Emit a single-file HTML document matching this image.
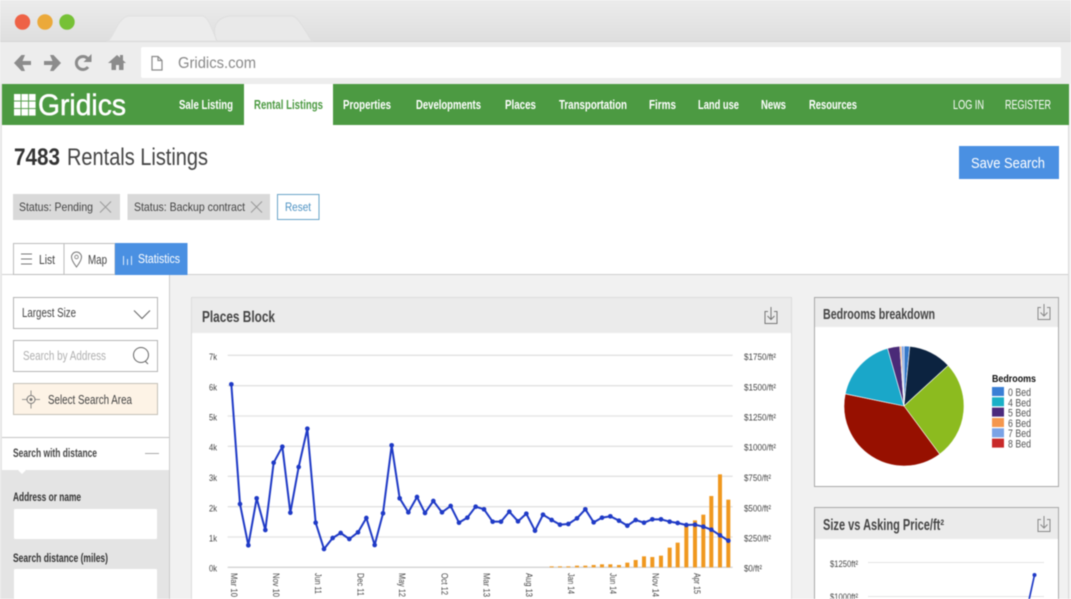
<!DOCTYPE html>
<html><head><meta charset="utf-8"><title>Gridics</title>
<style>
html,body{margin:0;padding:0;width:1071px;height:599px;overflow:hidden;background:#fff}
svg{display:block;filter:blur(.45px)}
text{font-family:"Liberation Sans",sans-serif;fill:#444}
.nav{font-size:13px;fill:#fff;font-weight:bold}
.tk{font-size:9.5px;fill:#444}
.lg{font-size:11px;fill:#555}
.lbl{font-size:12px;fill:#333;font-weight:bold}
</style></head><body>
<svg width="1071" height="599" viewBox="0 0 1071 599" xmlns="http://www.w3.org/2000/svg">
<defs>
<linearGradient id="top" x1="0" y1="0" x2="0" y2="1"><stop offset="0" stop-color="#ececec"/><stop offset="1" stop-color="#dedede"/></linearGradient>
<marker id="d" markerUnits="userSpaceOnUse" markerWidth="18" markerHeight="18" refX="9" refY="9"><circle cx="9" cy="9" r="7" fill="#1f3ac6"/></marker>
</defs>
<rect width="1071" height="599" fill="#fff"/>
<!-- browser chrome -->
<rect width="1071" height="42" fill="url(#top)"/>
<rect y="42" width="1071" height="42" fill="#ededed"/>
<rect y="41" width="1071" height="1" fill="#d6d6d6"/>
<path d="M108 41c6-4 9-22 20-25h75c6 2 9 14 14 25z" fill="#ececec" stroke="#e0e0e0"/>
<path d="M217 41c-4-8-5-22 12-25h64c7 3 13 17 19 25z" fill="#e9e9e9" stroke="#dedede"/>
<circle cx="22.500" cy="22" r="7.700" fill="#ee6246"/>
<circle cx="45" cy="22" r="7.700" fill="#eba93a"/>
<circle cx="67" cy="22" r="7.700" fill="#76c136"/>
<g fill="#8c8c8c">
<path d="M14 63l7.500-8h3.500l-2.500 6h8.500v4h-8.500l2.500 6h-3.500z"/>
<path d="M61 63l-7.500-8h-3.500l2.500 6h-8.500v4h8.500l-2.500 6h3.500z"/>
<path d="M88 67a6.500 6.500 0 1 1 0-8" fill="none" stroke="#8c8c8c" stroke-width="3"/>
<path d="M91.500 54v8h-8z"/>
<path d="M108 63l9-8 3 2.600V55h3v5.300l3 2.700h-2.500v7h-4.500v-5h-3v5h-4.500v-7z"/>
</g>
<rect x="141" y="47" width="920" height="31" rx="2" fill="#fff"/>
<path d="M152 56.500h6l4 4v9.500h-10zM158 56.500v4h4" fill="none" stroke="#8a8a8a" stroke-width="1.200"/>
<text x="178" y="68" font-size="16" textLength="78" lengthAdjust="spacingAndGlyphs" style="fill:#8a8a8a">Gridics.com</text>
<!-- green nav -->
<rect x="2" y="84" width="1067" height="41" fill="#4c9a42"/>
<rect x="244" y="84" width="89" height="41" fill="#fff"/>
<g fill="#fff">
<rect x="14" y="94" width="6.600" height="6.600"/><rect x="21.500" y="94" width="6.600" height="6.600"/><rect x="29" y="94" width="6.600" height="6.600"/>
<rect x="14" y="101.500" width="6.600" height="6.600"/><rect x="21.500" y="101.500" width="6.600" height="6.600"/><rect x="29" y="101.500" width="6.600" height="6.600"/>
<rect x="14" y="109" width="6.600" height="6.600"/><rect x="21.500" y="109" width="6.600" height="6.600"/><rect x="29" y="109" width="6.600" height="6.600"/>
</g>
<text x="38" y="115" font-size="30" textLength="88" lengthAdjust="spacingAndGlyphs" style="fill:#fff;stroke:#fff;stroke-width:.5">Gridics</text>
<g>
<text class="nav" x="179" y="109" textLength="54" lengthAdjust="spacingAndGlyphs">Sale Listing</text>
<text class="nav" x="254" y="109" textLength="69" lengthAdjust="spacingAndGlyphs" style="fill:#4c9a42">Rental Listings</text>
<text class="nav" x="343" y="109" textLength="48" lengthAdjust="spacingAndGlyphs">Properties</text>
<text class="nav" x="416" y="109" textLength="65" lengthAdjust="spacingAndGlyphs">Developments</text>
<text class="nav" x="505" y="109" textLength="31" lengthAdjust="spacingAndGlyphs">Places</text>
<text class="nav" x="559" y="109" textLength="68" lengthAdjust="spacingAndGlyphs">Transportation</text>
<text class="nav" x="649" y="109" textLength="27" lengthAdjust="spacingAndGlyphs">Firms</text>
<text class="nav" x="698" y="109" textLength="41" lengthAdjust="spacingAndGlyphs">Land use</text>
<text class="nav" x="761" y="109" textLength="25" lengthAdjust="spacingAndGlyphs">News</text>
<text class="nav" x="809" y="109" textLength="48" lengthAdjust="spacingAndGlyphs">Resources</text>
<text class="nav" x="953" y="109" textLength="31" lengthAdjust="spacingAndGlyphs" style="font-weight:normal">LOG IN</text>
<text class="nav" x="1005" y="109" textLength="46" lengthAdjust="spacingAndGlyphs" style="font-weight:normal">REGISTER</text>
</g>
<!-- window side borders -->
<rect x="0" y="84" width="2" height="515" fill="#e6e6e6"/>
<rect x="1068" y="125" width="1" height="474" fill="#d8d8d8"/>
<rect x="1069" y="84" width="2" height="515" fill="#f2f2f2"/>
<!-- heading -->
<text x="14" y="165" font-size="24" font-weight="bold" textLength="46" lengthAdjust="spacingAndGlyphs" style="fill:#333">7483</text>
<text x="67" y="165" font-size="24" textLength="141" lengthAdjust="spacingAndGlyphs" style="fill:#444">Rentals Listings</text>
<rect x="959" y="146" width="100" height="33" fill="#4a90e2"/>
<text x="971" y="168" font-size="14.500" textLength="74" lengthAdjust="spacingAndGlyphs" style="fill:#fff">Save Search</text>
<!-- chips -->
<rect x="13" y="194" width="107" height="26" fill="#d9d9d9"/>
<text x="19" y="211" font-size="12" textLength="74" lengthAdjust="spacingAndGlyphs">Status: Pending</text>
<path d="M100 201.500l11 11M111 201.500l-11 11" stroke="#9a9a9a" fill="none"/>
<rect x="127.500" y="194" width="142.500" height="26" fill="#d9d9d9"/>
<text x="134" y="211" font-size="12" textLength="111" lengthAdjust="spacingAndGlyphs">Status: Backup contract</text>
<path d="M251 201.500l11 11M262 201.500l-11 11" stroke="#9a9a9a" fill="none"/>
<rect x="277.500" y="194.500" width="41.500" height="25" fill="#fff" stroke="#6aa5c8"/>
<text x="285" y="211" font-size="11.500" textLength="26" lengthAdjust="spacingAndGlyphs" style="fill:#4a90c2">Reset</text>
<!-- main area -->
<rect x="170" y="275" width="898" height="324" fill="#f1f1f1"/>
<rect x="2" y="274" width="1066" height="1" fill="#cfcfcf"/>
<rect x="169" y="275" width="1" height="324" fill="#cccccc"/>
<!-- tabs -->
<rect x="13.500" y="243.500" width="50.500" height="31" fill="#fff" stroke="#bdbdbd"/>
<rect x="64" y="243.500" width="51" height="31" fill="#fff" stroke="#bdbdbd"/>
<rect x="115" y="243" width="72.500" height="32" fill="#4a90e2"/>
<path d="M21 254h11M21 259h11M21 264h11" stroke="#777" fill="none"/>
<text x="39" y="264" font-size="13" textLength="16" lengthAdjust="spacingAndGlyphs">List</text>
<path d="M76.500 267c-3-4-5-7-5-10a5 5 0 0 1 10 0c0 3-2 6-5 10z" fill="none" stroke="#777"/>
<circle cx="76.500" cy="257" r="1.800" fill="none" stroke="#777" stroke-width=".8"/>
<text x="88" y="264" font-size="13" textLength="19" lengthAdjust="spacingAndGlyphs">Map</text>
<path d="M123.500 256v9M127.500 259v6M131.500 256v9" stroke="#dcebfb" fill="none"/>
<text x="138" y="263" font-size="13" textLength="42" lengthAdjust="spacingAndGlyphs" style="fill:#fff">Statistics</text>
<!-- sidebar -->
<rect x="13.500" y="297.500" width="144" height="31" fill="#fff" stroke="#b5b5b5"/>
<text x="22" y="317" font-size="13" textLength="54" lengthAdjust="spacingAndGlyphs">Largest Size</text>
<path d="M134 310.500l8 8 8-8" fill="none" stroke="#666"/>
<rect x="13.500" y="340.500" width="144" height="31" fill="#fff" stroke="#b5b5b5"/>
<text x="23" y="360" font-size="13" textLength="83" lengthAdjust="spacingAndGlyphs" style="fill:#b0b0b0">Search by Address</text>
<circle cx="141" cy="355" r="7.500" fill="none" stroke="#666"/><path d="M145 361l3 3" stroke="#666"/>
<rect x="13.500" y="383.500" width="144" height="31" fill="#fdf3e6" stroke="#c4c0b8"/>
<path d="M22 399.500h18M31 390.500v18" stroke="#777" stroke-width=".8"/>
<circle cx="31" cy="399.500" r="4" fill="#fdf3e6" stroke="#777"/><circle cx="31" cy="399.500" r="1.500" fill="#777"/>
<text x="48" y="404" font-size="13" textLength="84" lengthAdjust="spacingAndGlyphs">Select Search Area</text>
<rect x="2" y="437" width="167" height="1" fill="#c4c4c4"/>
<text x="13" y="457" font-size="12" font-weight="bold" textLength="84" lengthAdjust="spacingAndGlyphs">Search with distance</text>
<path d="M145 453.500h14" stroke="#aaa"/>
<rect x="2" y="470" width="167" height="129" fill="#e4e4e4"/>
<path d="M18 470h8l-4 4z" fill="#fff"/>
<text class="lbl" x="13" y="501" textLength="68" lengthAdjust="spacingAndGlyphs">Address or name</text>
<rect x="14" y="509" width="143" height="30" rx="1" fill="#fff"/>
<text class="lbl" x="13" y="562" textLength="95" lengthAdjust="spacingAndGlyphs">Search distance (miles)</text>
<rect x="14" y="569" width="143" height="31" rx="1" fill="#fff"/>
<!-- places block -->
<rect x="191.500" y="297.500" width="600" height="303" fill="#fff" stroke="#dcdcdc"/>
<rect x="192" y="298" width="599" height="35" fill="#ebebeb"/>
<text x="202" y="322" font-size="16" font-weight="bold" textLength="73" lengthAdjust="spacingAndGlyphs" style="fill:#444">Places Block</text>
<g fill="none" stroke="#777"><path d="M768 311.500h-3v12h12v-12h-3"/><path d="M771 307v12M767.500 316l3.500 3.500 3.500-3.500"/></g>
<g transform="translate(190 295) scale(.33333)">
<g stroke="#e2e2e2" stroke-width="4" fill="none">
<path d="M113 181H1628M113 272H1628M113 363H1628M113 454H1628M113 544H1628M113 635H1628M113 726H1628"/>
<path d="M113 817H1628" stroke="#d4d4d4"/>
</g>
<g fill="#f0981f">
<rect x="1079" y="814" width="12" height="3"/><rect x="1104" y="814" width="12" height="3"/><rect x="1129" y="814" width="12" height="3"/>
<rect x="1155" y="812" width="12" height="5"/><rect x="1180" y="812" width="12" height="5"/><rect x="1205" y="810" width="12" height="7"/>
<rect x="1230" y="808" width="12" height="9"/><rect x="1255" y="808" width="12" height="9"/><rect x="1281" y="810" width="12" height="7"/>
<rect x="1306" y="803" width="12" height="14"/><rect x="1331" y="795" width="12" height="22"/><rect x="1356" y="784" width="12" height="33"/>
<rect x="1381" y="786" width="12" height="31"/><rect x="1407" y="782" width="12" height="35"/><rect x="1433" y="758" width="12" height="59"/>
<rect x="1457" y="743" width="12" height="74"/><rect x="1483" y="692" width="12" height="125"/><rect x="1509" y="676" width="12" height="141"/>
<rect x="1534" y="659" width="12" height="158"/><rect x="1558" y="603" width="12" height="214"/><rect x="1584" y="538" width="12" height="279"/>
<rect x="1609" y="614" width="12" height="203"/>
</g>
<polyline fill="none" stroke="#1f3ac6" stroke-width="6" stroke-linejoin="round" marker-start="url(#d)" marker-mid="url(#d)" marker-end="url(#d)" points="124,268 150,627 175,751 200,610 226,705 251,503 277,455 301,653 326,516 352,401 377,683 402,762 428,729 452,714 478,732 504,712 529,669 554,750 579,655 605,451 629,610 655,652 681,606 705,654 730,618 756,652 782,633 807,683 832,668 857,635 882,643 908,680 933,680 958,650 984,679 1009,656 1035,707 1059,659 1085,675 1110,689 1135,687 1161,670 1186,643 1211,682 1236,668 1261,664 1287,677 1312,692 1337,675 1362,683 1387,673 1413,673 1439,680 1463,684 1489,690 1515,689 1540,695 1564,704 1590,721 1615,737"/>
</g>
<g>
<text class="tk" x="209" y="360" textLength="8" lengthAdjust="spacingAndGlyphs">7k</text>
<text class="tk" x="209" y="390.700" textLength="8" lengthAdjust="spacingAndGlyphs">6k</text>
<text class="tk" x="209" y="420.700" textLength="8" lengthAdjust="spacingAndGlyphs">5k</text>
<text class="tk" x="209" y="450.700" textLength="8" lengthAdjust="spacingAndGlyphs">4k</text>
<text class="tk" x="209" y="481" textLength="8" lengthAdjust="spacingAndGlyphs">3k</text>
<text class="tk" x="209" y="511.300" textLength="8" lengthAdjust="spacingAndGlyphs">2k</text>
<text class="tk" x="209" y="541.300" textLength="8" lengthAdjust="spacingAndGlyphs">1k</text>
<text class="tk" x="209" y="571.300" textLength="8" lengthAdjust="spacingAndGlyphs">0k</text>
<text class="tk" x="744" y="360" textLength="32" lengthAdjust="spacingAndGlyphs">$1750/ft²</text>
<text class="tk" x="744" y="390.700" textLength="32" lengthAdjust="spacingAndGlyphs">$1500/ft²</text>
<text class="tk" x="744" y="420.700" textLength="32" lengthAdjust="spacingAndGlyphs">$1250/ft²</text>
<text class="tk" x="744" y="450.700" textLength="32" lengthAdjust="spacingAndGlyphs">$1000/ft²</text>
<text class="tk" x="744" y="481" textLength="27" lengthAdjust="spacingAndGlyphs">$750/ft²</text>
<text class="tk" x="744" y="511.300" textLength="27" lengthAdjust="spacingAndGlyphs">$500/ft²</text>
<text class="tk" x="744" y="541.300" textLength="27" lengthAdjust="spacingAndGlyphs">$250/ft²</text>
<text class="tk" x="744" y="571.300" textLength="18" lengthAdjust="spacingAndGlyphs">$0/ft²</text>
<text class="tk" transform="translate(231.200 573) rotate(90)" textLength="24" lengthAdjust="spacingAndGlyphs">Mar 10</text>
<text class="tk" transform="translate(273.200 573) rotate(90)" textLength="24" lengthAdjust="spacingAndGlyphs">Nov 10</text>
<text class="tk" transform="translate(315.200 573) rotate(90)" textLength="21" lengthAdjust="spacingAndGlyphs">Jun 11</text>
<text class="tk" transform="translate(357.600 573) rotate(90)" textLength="23" lengthAdjust="spacingAndGlyphs">Dec 11</text>
<text class="tk" transform="translate(399.200 573) rotate(90)" textLength="24" lengthAdjust="spacingAndGlyphs">May 12</text>
<text class="tk" transform="translate(441.600 573) rotate(90)" textLength="22" lengthAdjust="spacingAndGlyphs">Oct 12</text>
<text class="tk" transform="translate(483.600 573) rotate(90)" textLength="24" lengthAdjust="spacingAndGlyphs">Mar 13</text>
<text class="tk" transform="translate(525.900 573) rotate(90)" textLength="24" lengthAdjust="spacingAndGlyphs">Aug 13</text>
<text class="tk" transform="translate(567.900 573) rotate(90)" textLength="21" lengthAdjust="spacingAndGlyphs">Jan 14</text>
<text class="tk" transform="translate(609.900 573) rotate(90)" textLength="21" lengthAdjust="spacingAndGlyphs">Jun 14</text>
<text class="tk" transform="translate(652.600 573) rotate(90)" textLength="24" lengthAdjust="spacingAndGlyphs">Nov 14</text>
<text class="tk" transform="translate(693.900 573) rotate(90)" textLength="21" lengthAdjust="spacingAndGlyphs">Apr 15</text>
</g>
<!-- bedrooms panel -->
<rect x="814.500" y="297.500" width="244" height="189" fill="#fff" stroke="#a8a8a8"/>
<rect x="815" y="298" width="243" height="29" fill="#ebebeb"/>
<text x="823" y="319" font-size="14.500" font-weight="bold" textLength="112" lengthAdjust="spacingAndGlyphs" style="fill:#444">Bedrooms breakdown</text>
<g fill="none" stroke="#888"><path d="M1041 307.500h-3v12h12v-12h-3"/><path d="M1044 304v12M1040.500 312.500l3.500 3.500 3.500-3.500"/></g>
<g stroke="#fff" stroke-width=".6">
<path d="M904 406L904 346A60 60 0 0 1 909.750 346.280Z" fill="#3578c8"/>
<path d="M904 406L909.750 346.280A60 60 0 0 1 948.240 365.460Z" fill="#0c2340"/>
<path d="M904 406L948.240 365.460A60 60 0 0 1 939.690 454.230Z" fill="#8cbb1f"/>
<path d="M904 406L939.690 454.230A60 60 0 0 1 845.250 393.830Z" fill="#971000"/>
<path d="M904 406L845.250 393.830A60 60 0 0 1 887.560 348.300Z" fill="#1aa7c9"/>
<path d="M904 406L887.560 348.300A60 60 0 0 1 899.810 346.140Z" fill="#4a2a78"/>
<path d="M904 406L899.810 346.140A60 60 0 0 1 901.380 346.060Z" fill="#f0924a"/>
<path d="M904 406L901.380 346.060A60 60 0 0 1 904 346Z" fill="#7da0e0"/>
</g>
<text x="992" y="382" font-size="10" font-weight="bold" textLength="44" lengthAdjust="spacingAndGlyphs" style="fill:#111">Bedrooms</text>
<rect x="992" y="387" width="12" height="9" fill="#3a7fd5"/>
<rect x="992" y="397.300" width="12" height="9" fill="#1bb0c7"/>
<rect x="992" y="407.600" width="12" height="9" fill="#4c2a7c"/>
<rect x="992" y="418" width="12" height="9" fill="#f5974e"/>
<rect x="992" y="428.300" width="12" height="9" fill="#7ba3e6"/>
<rect x="992" y="438.600" width="12" height="9" fill="#c82a2a"/>
<text class="lg" x="1008" y="396" textLength="23" lengthAdjust="spacingAndGlyphs">0 Bed</text>
<text class="lg" x="1008" y="406.300" textLength="23" lengthAdjust="spacingAndGlyphs">4 Bed</text>
<text class="lg" x="1008" y="416.600" textLength="23" lengthAdjust="spacingAndGlyphs">5 Bed</text>
<text class="lg" x="1008" y="426.900" textLength="23" lengthAdjust="spacingAndGlyphs">6 Bed</text>
<text class="lg" x="1008" y="437.200" textLength="23" lengthAdjust="spacingAndGlyphs">7 Bed</text>
<text class="lg" x="1008" y="447.500" textLength="23" lengthAdjust="spacingAndGlyphs">8 Bed</text>
<!-- size vs price panel -->
<rect x="814.500" y="507.500" width="244" height="93" fill="#fff" stroke="#a8a8a8"/>
<rect x="815" y="508" width="243" height="31" fill="#ebebeb"/>
<text x="823" y="530" font-size="15.500" font-weight="bold" textLength="121" lengthAdjust="spacingAndGlyphs" style="fill:#444">Size vs Asking Price/ft²</text>
<g fill="none" stroke="#888"><path d="M1041 519.500h-3v12h12v-12h-3"/><path d="M1044 516v12M1040.500 524.500l3.500 3.500 3.500-3.500"/></g>
<path d="M868 562.500H1044M868 596.500H1044" stroke="#e4e4e4" fill="none"/>
<text class="tk" x="830" y="567" textLength="28" lengthAdjust="spacingAndGlyphs">$1250ft²</text>
<text class="tk" x="830" y="600" textLength="28" lengthAdjust="spacingAndGlyphs">$1000ft²</text>
<path d="M1034.500 575L1029 600" stroke="#1f3ac6" stroke-width="1.700" fill="none"/>
<circle cx="1034.500" cy="575" r="2" fill="#1f3ac6"/>
</svg>
</body></html>
